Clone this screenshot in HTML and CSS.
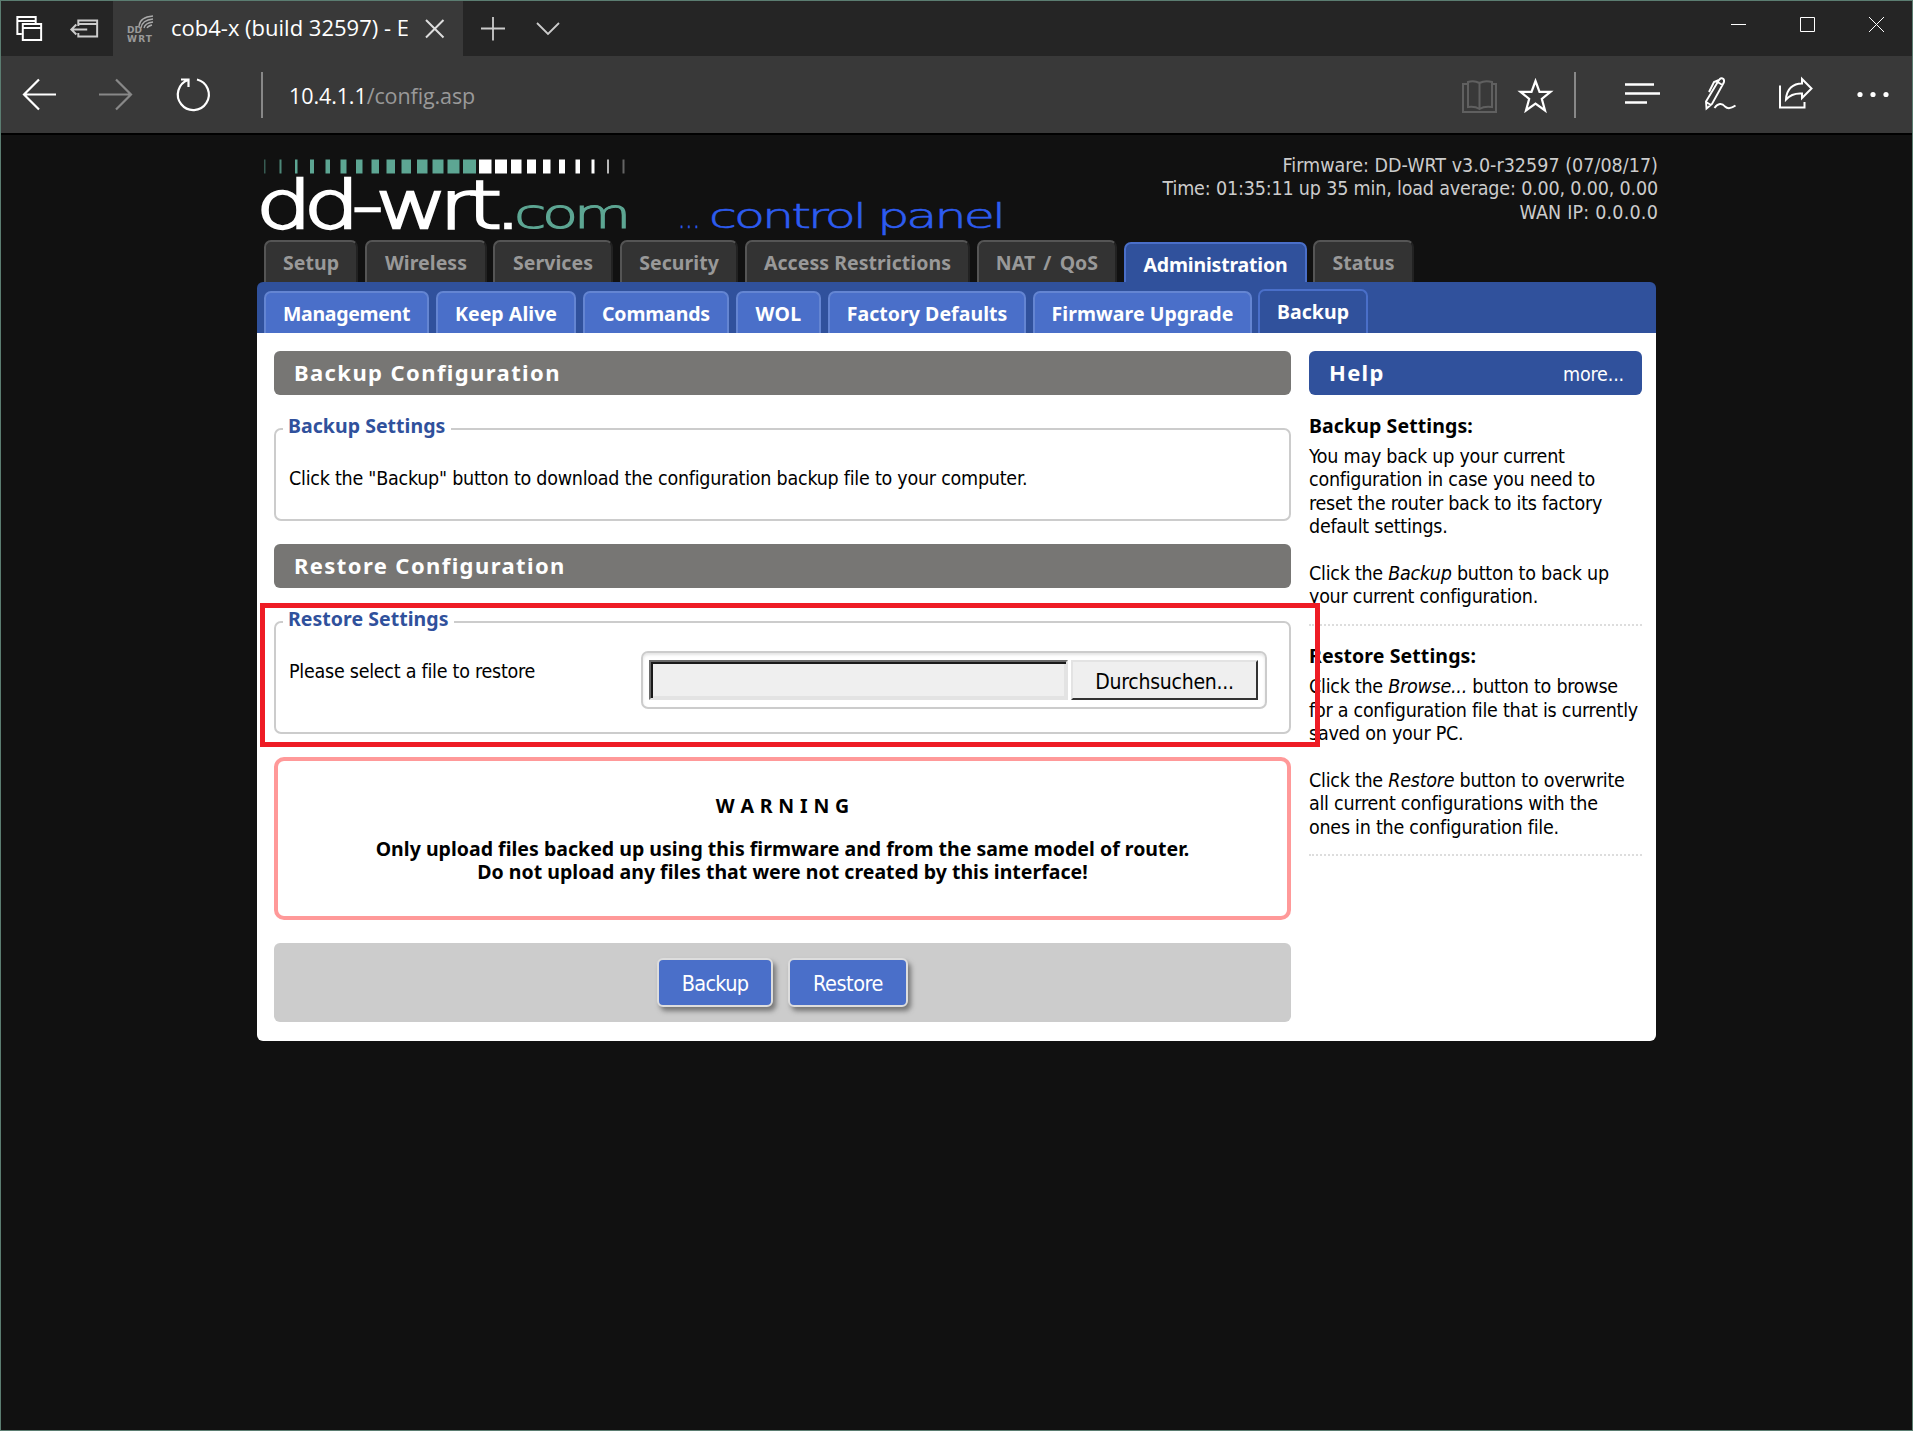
FILE: index.html
```html
<!DOCTYPE html>
<html lang="en">
<head>
<meta charset="utf-8">
<title>cob4-x (build 32597) - Backup</title>
<link rel="stylesheet" href="styles.css">
</head>
<body>
<div class="window">
  <div class="tabbar">
    <svg class="tabbar-left" width="113" height="55" viewBox="0 0 113 55" fill="none" stroke="#fff" stroke-width="2">
      <path d="M21 33H16.5V16H35V22M17 20H35"/>
      <path d="M22 23H40.500V39H22ZM22 27H40.500"/>
      <g stroke="#ccc"><path d="M78 25V19.500H97V35.500H78V32M79 23H97M71 28.500H87M76 23.500L71 28.500L76 33.500"/></g>
    </svg>
    <div class="browser-tab">
      <svg class="favicon" width="28" height="28" viewBox="0 0 28 28" fill="none" stroke="#aaa" stroke-width="1.300">
        <path d="M12 11Q13 2 26 1M14 13Q15 5 26 4M17 13Q18 8 26 7M20 13Q21 11 25 10"/>
        <text class="fav-text" x="0" y="18" textLength="15">DD</text>
        <text class="fav-text" x="0" y="27" textLength="25">WRT</text>
      </svg>
      <span class="tab-title">cob4-x (build 32597) - E</span>
      <svg width="20" height="20" viewBox="0 0 20 20" stroke="#ddd" stroke-width="2"><path d="M1 1L18.500 18.500M18.500 1L1 18.500"/></svg>
    </div>
    <svg width="110" height="55" viewBox="0 0 110 55" fill="none" stroke="#ccc" stroke-width="1.800"><path d="M18 27.500H42M30 16V39.500M74 22L85 33L96 22"/></svg>
    <svg class="window-controls" width="190" height="55" viewBox="0 0 190 55" fill="none" stroke="#fff" stroke-width="1"><path d="M9 23.500H24M78.500 16.500H92.500V30.500H78.500ZM147 16L162 31M162 16L147 31"/></svg>
  </div>
  <div class="toolbar">
    <svg width="288" height="77" viewBox="1 56 288 77" fill="none" stroke="#fff" stroke-width="2.200">
      <path d="M56 94.500H24M39 79.500L24 94.500L39 109.500"/>
      <path stroke="#888" d="M99 94.500H131M116 79.500L131 94.500L116 109.500"/>
      <path d="M197 79.500A15.500 15.500 0 1 1 188 80M181 79.500H188.500V87"/>
      <path stroke="#888" stroke-width="2" d="M262 72V118"/>
    </svg>
    <span class="url">10.4.1.1<span class="url-path">/config.asp</span></span>
    <svg class="tools" width="452" height="77" viewBox="1460 56 452 77" fill="none" stroke="#fff" stroke-width="2.200">
      <g stroke="#606060" stroke-width="2"><path d="M1468 84H1463V112H1496V84H1492M1479.500 109V83M1479.500 83Q1474 80 1468 82V107Q1475 106 1479.500 109Q1484 106 1492 107V82Q1485 80 1479.500 83"/></g>
      <path d="M1535.500 81L1539.500 91.800H1550.500L1541.800 98.800L1545 110.500L1535.500 103.500L1526 110.500L1529.200 98.800L1520.500 91.800H1531.500Z"/>
      <path stroke="#888" stroke-width="2" d="M1575 72V118"/>
      <path stroke-width="2.500" d="M1625 84.500H1654M1625 93.500H1660M1625 102.500H1647"/>
      <g stroke-width="1.900"><path d="M1719 80Q1721 77 1723.500 79Q1725 81 1723 84L1712 104L1706.500 108.500L1706 101.500ZM1717.500 82L1722.500 85M1719 80L1714 82L1709 92M1706 102L1711 105M1714.500 108C1718 103 1722 103 1725 106.500C1728 109.500 1732 108 1735.500 105.500"/></g>
      <path stroke-width="2" d="M1780 85.500V107.500H1804.500V102M1786 99.500C1786.500 89 1793 83.500 1802 83.500V79L1811.500 88.500L1802 98V93.500C1795 93 1790 95 1786 99.500Z"/>
      <g fill="#fff" stroke="none"><circle cx="1860" cy="94.500" r="2.600"/><circle cx="1873" cy="94.500" r="2.600"/><circle cx="1886" cy="94.500" r="2.600"/></g>
    </svg>
  </div>

  <div class="page">
    <header class="header">
      <svg class="logo" width="760" height="105" viewBox="257 135 760 105">
        <g fill="#5da693">
          <rect x="264" y="159.500" width="1.500" height="14" opacity=".5"/><rect x="279.500" y="159.500" width="2" height="14" opacity=".8"/><rect x="295" y="159.500" width="2.500" height="14"/><rect x="310" y="159.500" width="4" height="14"/><rect x="325.500" y="159.500" width="4.500" height="14"/><rect x="340.500" y="159.500" width="6" height="14"/><rect x="356" y="159.500" width="6.500" height="14"/><rect x="371.500" y="159.500" width="7.500" height="14"/><rect x="386.500" y="159.500" width="8.500" height="14"/><rect x="401.500" y="159.500" width="9.500" height="14"/><rect x="417" y="159.500" width="10.500" height="14"/><rect x="432.500" y="159.500" width="11" height="14"/><rect x="447.500" y="159.500" width="12" height="14"/><rect x="463" y="159.500" width="13" height="14"/>
        </g>
        <g fill="#fff">
          <rect x="479" y="159.500" width="12.500" height="14"/><rect x="495" y="159.500" width="12" height="14"/><rect x="511" y="159.500" width="10.500" height="14"/><rect x="527" y="159.500" width="9" height="14"/><rect x="543" y="159.500" width="7.500" height="14"/><rect x="559" y="159.500" width="6" height="14"/><rect x="575.500" y="159.500" width="4.500" height="14"/><rect x="591.500" y="159.500" width="3" height="14"/><rect x="607" y="159.500" width="2" height="14" opacity=".7"/><rect x="622.500" y="159.500" width="2" height="14" opacity=".35"/>
        </g>
        <text class="logo-main" x="256" y="227.500" textLength="258" lengthAdjust="spacingAndGlyphs">dd-wrt.</text>
        <text class="logo-com" x="514" y="228" textLength="113" lengthAdjust="spacingAndGlyphs">com</text>
        <text class="logo-panel" x="678" y="228" textLength="22" lengthAdjust="spacingAndGlyphs">...</text>
        <text class="logo-panel logo-wide" x="709" y="228" textLength="294" lengthAdjust="spacingAndGlyphs">control panel</text>
      </svg>
      <div class="info">Firmware: DD-WRT v3.0-r32597 (07/08/17)<br><span class="uptime">Time: 01:35:11 up 35 min, load average: 0.00, 0.00, 0.00</span><br><span class="wan">WAN IP: 0.0.0.0</span></div>
    </header>
    <nav class="tabs">
      <a class="tab w-setup">Setup</a><a class="tab w-wireless">Wireless</a><a class="tab w-services">Services</a><a class="tab w-security">Security</a><a class="tab w-access">Access Restrictions</a><a class="tab w-nat">NAT / QoS</a><a class="tab tab-active w-admin">Administration</a><a class="tab w-status">Status</a>
    </nav>
    <nav class="subtabs">
      <a class="sub w-management">Management</a><a class="sub w-keep">Keep Alive</a><a class="sub w-commands">Commands</a><a class="sub w-wol">WOL</a><a class="sub w-factory">Factory Defaults</a><a class="sub w-firmware">Firmware Upgrade</a><a class="sub sub-active w-backup">Backup</a>
    </nav>
    <div class="panel">
      <main class="main">
        <h2 class="heading">Backup Configuration</h2>
        <fieldset class="group group-backup">
          <legend>Backup Settings</legend>
          <p class="group-text">Click the "Backup" button to download the configuration backup file to your computer.</p>
        </fieldset>
        <h2 class="heading heading-second">Restore Configuration</h2>
        <fieldset class="group group-restore">
          <legend>Restore Settings</legend>
          <div class="file-row">
            <span class="file-label">Please select a file to restore</span>
            <div class="file-box"><div class="file-input"></div><div class="file-button">Durchsuchen...</div></div>
          </div>
        </fieldset>
        <div class="warning">
          <p class="warning-title">W A R N I N G</p>
          <p>Only upload files backed up using this firmware and from the same model of router.<br>Do not upload any files that were not created by this interface!</p>
        </div>
        <div class="footer"><div class="button button-backup">Backup</div><div class="button button-restore">Restore</div></div>
      </main>
      <aside class="help">
        <h2 class="heading help-heading">Help<a class="more">more...</a></h2>
        <h4>Backup Settings:</h4>
        <p>You may back up your current<br>configuration in case you need to<br>reset the router back to its factory<br>default settings.<br><br>Click the <i>Backup</i> button to back up<br>your current configuration.</p>
        <hr>
        <h4>Restore Settings:</h4>
        <p>Click the <i>Browse...</i> button to browse<br>for a configuration file that is currently<br>saved on your PC.<br><br>Click the <i>Restore</i> button to overwrite<br>all current configurations with the<br>ones in the configuration file.</p>
        <hr>
      </aside>
    </div>
  </div>
  <div class="marker"></div>
</div>
</body>
</html>
```
FILE: styles.css
```css
* { box-sizing: border-box; }
body {
  margin: 0;
  background: #111;
  font-family: "DejaVu Sans Condensed", "DejaVu Sans", sans-serif;
  font-stretch: condensed;
  font-size: 19.5px;
  line-height: 23px;
  letter-spacing: -0.25px;
  color: #000;
  white-space: nowrap;
}
h2, h4, p, fieldset, legend { margin: 0; padding: 0; }
svg { display: block; flex: none; overflow: visible; letter-spacing: 0; }

.window {
  position: relative;
  width: 1913px;
  height: 1431px;
  border: 1px solid #5b7d71;
  overflow: hidden;
}
.tabbar { display: flex; height: 55px; background: #252525; }
.tabbar-left { width: 112px; }
.browser-tab {
  display: flex;
  align-items: center;
  width: 350px;
  padding-left: 14px;
  background: #393939;
}
.tab-title {
  width: 237px;
  margin: 0 17px 3px 16px;
  overflow: hidden;
  font: 22px/30px "Open Sans", sans-serif;
  letter-spacing: 0;
  color: #fff;
}
.fav-text { font: bold 9px "DejaVu Sans", sans-serif; fill: #999; stroke: none; }
.window-controls { margin-left: auto; }
.toolbar {
  display: flex;
  height: 79px;
  background: #393939;
  border-bottom: 2px solid #000;
}
.url { font: 21.5px/79px "Open Sans", sans-serif; letter-spacing: -0.1px; color: #fff; }
.url-path { color: #999; }
.tools { margin-left: auto; }

.page { width: 1399px; margin-left: 256px; }
.header { display: flex; justify-content: space-between; height: 105px; }
.logo-main { font: 200 66px "DejaVu Sans", sans-serif; fill: #fff; stroke: #fff; stroke-width: 2.4px; letter-spacing: -6px; }
.logo-com { font: 200 40px "DejaVu Sans", sans-serif; fill: #5da693; stroke: #5da693; stroke-width: 1px; letter-spacing: -3px; }
.logo-panel { font: 200 34px "DejaVu Sans", sans-serif; fill: #2d5cf0; stroke: #2d5cf0; stroke-width: .6px; }
.logo-wide { letter-spacing: -2px; }
.info {
  padding-top: 19px;
  margin-right: -2px;
  line-height: 23.4px;
  letter-spacing: 0.03px;
  text-align: right;
  color: #ccc;
}
.uptime { letter-spacing: -0.16px; }
.wan { letter-spacing: 0.2px; }
.tabs { display: flex; align-items: flex-end; height: 42px; padding-left: 7px; }
.tab, .sub {
  height: 42px;
  border: 2px solid #555;
  border-right-color: #222;
  border-bottom: 0;
  border-radius: 7px 7px 0 0;
  background: #333;
  color: #999;
  font-family: "Noto Sans", sans-serif;
  font-weight: bold;
  line-height: 42px;
  letter-spacing: 0.05px;
  text-align: center;
}
.tab { margin-right: 7px; }
.tab-active { height: 40px; background: #30519c; border-color: #4a6fc9; color: #fff; margin-right: 6px; letter-spacing: -0.19px; }
.w-setup { width: 94px; }
.w-wireless { width: 122px; margin-right: 6px; }
.w-services { width: 120px; }
.w-security { width: 118px; }
.w-access { width: 225px; }
.w-nat { width: 140px; word-spacing: 3px; }
.w-admin { width: 183px; }
.w-status { width: 101px; }
.subtabs {
  display: flex;
  align-items: flex-end;
  height: 51px;
  padding-left: 7px;
  background: #30519c;
  border-radius: 6px 6px 0 0;
}
.sub { margin-right: 7px; background: #4a6fc9; border-color: #6485d2; color: #fff; }
.sub-active { height: 44px; margin-left: -1px; background: #30519c; border-color: #4a6fc9; }
.w-management { width: 165px; letter-spacing: -0.3px; }
.w-keep { width: 140px; }
.w-commands { width: 146px; letter-spacing: -0.15px; }
.w-wol { width: 85px; letter-spacing: 0.3px; }
.w-factory { width: 198px; }
.w-firmware { width: 219px; }
.w-backup { width: 110px; }

.panel {
  display: flex;
  gap: 18px;
  height: 708px;
  padding: 18px 14px 19px 17px;
  background: #fff;
  border-radius: 0 0 6px 6px;
}
.main { width: 1017px; }
.heading {
  height: 44px;
  padding-left: 20px;
  border-radius: 6px;
  background: #777674;
  color: #fff;
  font-family: "Noto Sans", sans-serif;
  font-size: 22px;
  line-height: 43px;
  letter-spacing: 1.4px;
}
.heading-second { margin-top: 23px; }
.group {
  min-width: 0;
  margin-top: 20px;
  border: 2px solid #ccc;
  border-radius: 7px;
}
.group legend {
  height: 28px;
  margin-left: 7px;
  padding: 0 6px 5px 5px;
  color: #30519c;
  font-family: "Noto Sans", sans-serif;
  font-weight: bold;
  line-height: 22px;
  letter-spacing: 0.04px;
}
.group-backup { height: 106px; }
.group-restore { height: 126px; }
.group-text { padding: 24px 0 0 13px; letter-spacing: -0.24px; }
.file-row { display: flex; justify-content: space-between; padding: 15px 22px 0 13px; }
.file-label { padding-top: 9px; }
.file-box {
  display: flex;
  gap: 3px;
  width: 626px;
  height: 58px;
  padding: 7px 6px;
  border: 2px solid #ccc;
  border-radius: 7px;
  box-shadow: inset 0 2px 3px #e4e4e4;
}
.file-input {
  width: 419px;
  height: 40px;
  border: 2px solid;
  border-color: #696969 #e3e3e3 #e3e3e3 #696969;
  background: #efefef;
  box-shadow: inset 2px 2px #1a1a1a, inset -2px -2px #e3e3e3;
}
.file-button {
  width: 187px;
  height: 40px;
  border: 2px solid;
  border-color: #e3e3e3 #333 #333 #e3e3e3;
  background: #efefef;
  font-size: 21px;
  line-height: 40px;
  text-align: center;
}
.warning {
  height: 163px;
  margin-top: 23px;
  padding-top: 33px;
  border: 4px solid #f99;
  border-radius: 10px;
  font-family: "Noto Sans", sans-serif;
  font-weight: bold;
  letter-spacing: 0.02px;
  text-align: center;
}
.warning-title { margin-bottom: 20px; word-spacing: 0.7px; }
.footer {
  display: flex;
  justify-content: center;
  gap: 15px;
  height: 79px;
  margin-top: 23px;
  padding-top: 15px;
  border-radius: 6px;
  background: #ccc;
}
.button {
  height: 49px;
  border: 2px solid #ddd;
  border-radius: 6px;
  background: #4a6fc9;
  box-shadow: 3px 4px 5px #777;
  color: #fff;
  font-size: 21.5px;
  line-height: 47px;
  letter-spacing: -0.45px;
  text-align: center;
}
.button-backup { width: 116px; letter-spacing: -0.7px; }
.button-restore { width: 120px; }

.help { width: 333px; }
.help-heading { display: flex; justify-content: space-between; padding-right: 18px; background: #30519c; letter-spacing: 1.3px; }
.more {
  font-family: "DejaVu Sans Condensed", "DejaVu Sans", sans-serif;
  font-size: 19.5px;
  font-weight: normal;
  line-height: 47px;
  letter-spacing: -0.16px;
}
.help h4 { margin-top: 20px; font: bold 19.5px/22px "Noto Sans", sans-serif; letter-spacing: 0.1px; }
.help p { margin-top: 8px; line-height: 23.4px; }
.help hr { margin: 15px 0 0; border: 0; border-top: 2px dotted #ddd; }
.help hr + h4 { margin-top: 19px; }
.help hr + h4 + p { margin-top: 8.6px; }

.marker {
  position: absolute;
  left: 259px;
  top: 602px;
  width: 1060px;
  height: 144px;
  border: 5px solid #ee1c25;
}
```
